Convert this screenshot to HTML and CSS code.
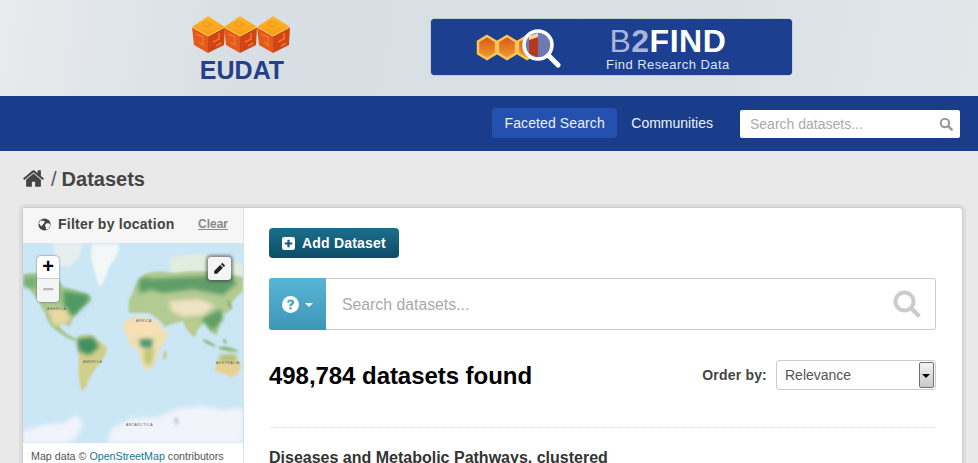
FILE: index.html
```html
<!DOCTYPE html>
<html lang="en">

<head>
    <meta charset="UTF-8">
    <meta name="viewport" content="width=device-width, initial-scale=1.0">
    <title>Datasets - B2FIND</title>
    <link rel="stylesheet" href="styles.css">
</head>

<body>
    <header class="masthead">
        <a class="logo" href="#">
            <svg class="logo-cubes" viewBox="0 0 98 38" width="98" height="38">
                <defs>
                    <linearGradient id="cubeTop" x1="0" y1="0" x2="0" y2="1">
                        <stop offset="0" stop-color="#fdb92e"/>
                        <stop offset="1" stop-color="#f79a15"/>
                    </linearGradient>
                    <g id="cube">
                        <path d="M16 0L33 11 16 20 0 11z" fill="url(#cubeTop)"/>
                        <path d="M0 11L16 20V37L2 29z" fill="#e35a1c"/>
                        <path d="M33 11L16 20V37L32 29z" fill="#cf4614"/>
                        <path d="M0 11L16 20 33 11" fill="none" stroke="#fdd35a" stroke-width="1"/>
                        <path d="M4 18l7 3v8M7 26l5 4M21 26l6-3v-6M24 30l5-3" fill="none" stroke="#f0752a" stroke-width="1.500"/>
                        <path d="M10 8l5-3 5 3-5 3z" fill="none" stroke="#f08f16" stroke-width="1"/>
                    </g>
                </defs>
                <use href="#cube"/>
                <use href="#cube" x="32"/>
                <use href="#cube" x="65"/>
            </svg>
            <span class="logo-name">EUDAT</span>
        </a>
        <a class="banner" href="#">
            <svg class="banner-icon" viewBox="0 0 88 40" width="88" height="40">
                <defs>
                    <linearGradient id="hexFill" x1="0" y1="0" x2="0" y2="1">
                        <stop offset="0" stop-color="#d9531a"/>
                        <stop offset="1" stop-color="#f0a030"/>
                    </linearGradient>
                </defs>
                <g stroke="#f8c65a" stroke-width="2.500" fill="url(#hexFill)">
                    <path d="M11 8l9 5.500v12l-9 5.500-9-5.500v-12z"/>
                    <path d="M31 8l9 5.500v12l-9 5.500-9-5.500v-12z"/>
                    <path d="M51 8l9 5.500v12l-9 5.500-9-5.500v-12z"/>
                </g>
                <circle cx="62" cy="17" r="14" fill="#6f79b4"/>
                <path d="M53 8l9-3v24l-9-3z" fill="#b5391d"/>
                <path d="M53 8l9-3 0 4-9 3z" fill="#f3d9a0"/>
                <circle cx="62" cy="17" r="14" fill="none" stroke="#fff" stroke-width="3.500"/>
                <path d="M73 28L82 37" stroke="#fff" stroke-width="5" stroke-linecap="round"/>
            </svg>
            <span class="banner-text">
                <span class="banner-title"><span class="banner-b">B</span><b class="banner-two">2</b><b>FIND</b></span>
                <span class="banner-sub">Find Research Data</span>
            </span>
        </a>
    </header>

    <nav class="navbar">
        <a class="nav-link active" href="#">Faceted Search</a>
        <a class="nav-link" href="#">Communities</a>
        <div class="nav-search">
            <span class="nav-placeholder">Search datasets...</span>
            <svg class="icon" viewBox="0 0 16 16" width="14" height="14">
                <circle cx="6.800" cy="6.800" r="4.800" fill="none" stroke="#999" stroke-width="2.400"/>
                <path d="M10.500 10.500L14.500 14.500" stroke="#999" stroke-width="2.800" stroke-linecap="round"/>
            </svg>
        </div>
    </nav>

    <div class="toolbar">
        <svg class="home" viewBox="0 0 1792 1792" width="23" height="23">
            <path fill="#444" d="M1472 992v480q0 26-19 45t-45 19h-384v-384h-256v384h-384q-26 0-45-19t-19-45v-480q0-1 .5-3t.5-3l575-474 575 474q1 2 1 6zm223-69l-62 74q-8 9-21 11h-3q-13 0-21-7l-692-577-692 577q-12 8-24 7-13-2-21-11l-62-74q-8-10-7-23.500t11-21.500l719-599q32-26 76-26t76 26l244 204v-195q0-14 9-23t23-9h192q14 0 23 9t9 23v408l219 182q10 8 11 21.500t-7 23.500z"/>
        </svg>
        <span class="crumb-sep">/</span>
        <strong class="crumb">Datasets</strong>
    </div>

    <div class="wrapper">
        <aside class="sidebar">
            <div class="filter-head">
                <h2 class="filter-title">
                    <svg class="icon" viewBox="0 0 16 16" width="13" height="13">
                        <circle cx="8" cy="8" r="7.500" fill="#444"/>
                        <path d="M3 3c2 1 4 0 5 1s-1 3-2 4-1 3-2 2-2-3-3-3zM10 7c2-1 4 0 5 1 0 3-2 6-4 6s-1-3-2-4 0-2 1-3z" fill="#f6f6f6"/>
                    </svg>
                    Filter by location
                </h2>
                <a class="filter-clear" href="#">Clear</a>
            </div>
            <div class="map">
                <svg class="map-art" viewBox="0 0 220 200" width="220" height="200">
                    <defs>
                        <filter id="soft" x="-10%" y="-10%" width="120%" height="120%">
                            <feGaussianBlur stdDeviation="1"/>
                        </filter>
                        <filter id="softer" x="-20%" y="-20%" width="140%" height="140%">
                            <feGaussianBlur stdDeviation="2.200"/>
                        </filter>
                    </defs>
                    <rect width="220" height="200" fill="#cbe7f6"/>

                    <!-- land base -->
                    <g filter="url(#soft)">
                        <!-- snow in the north -->
                        <path d="M30 0H60L56 14 46 24 32 22z" fill="#e6eef0"/>
                        <path d="M69 1H95Q98 6 93 14L86 24 80 40 76 44 72 30 68 14z" fill="#f3f7f8"/>
                        <path d="M146 16Q170 8 196 14 210 18 220 22V38L150 36z" fill="#e2ecdf"/>
                        <!-- north america -->
                        <path d="M0 32Q10 28 20 32 34 30 40 44 52 46 60 50 70 52 68 58 60 62 56 66 50 74 46 84 42 78 36 82 40 90 50 94 54 96 52 98 44 96 34 88 26 84 22 70 16 58 8 48 0 46z" fill="#a4c68f"/>
                        <!-- south america -->
                        <path d="M54 94Q62 90 68 92 76 98 84 104 84 112 76 122 68 130 64 142 60 150 58 146 54 132 56 118 52 106z" fill="#d2cf8c"/>
                        <!-- africa -->
                        <path d="M100 80Q106 74 116 74 128 74 134 82 140 88 146 90 142 100 136 106 134 118 126 128 122 128 118 118 116 104 106 102 98 94z" fill="#f1dfb2"/>
                        <path d="M141 108q3-1 3 3-1 6-3 6-2-1-1-4z" fill="#c9cd8e"/>
                        <!-- eurasia -->
                        <path d="M106 70Q104 56 110 50 110 42 120 32 132 26 150 30 176 26 200 30 214 32 220 34V48Q212 54 208 62 208 72 200 70 196 80 194 92 186 90 182 80 174 84 172 94 166 92 160 78 150 80 142 84 136 76 126 70 114 72z" fill="#b3cb92"/>
                        <path d="M180 96q8 2 14 8-8-1-14-6zM196 104q8-2 20 4-8 2-20-2zM200 96q4 0 4 5-3 0-4-3zM204 56q6 4 5 11-3-1-5-5z" fill="#8fb97e"/>
                        <!-- australia -->
                        <path d="M194 117Q200 110 208 111 216 114 218 124 214 134 208 134 200 130 192 128z" fill="#e8d193"/>
                    </g>

                    <!-- forests and deserts -->
                    <g filter="url(#softer)">
                        <path d="M40 48L66 52 64 60 52 72 42 72z" fill="#4f9a62"/>
                        <path d="M0 34L14 34 12 46 0 44z" fill="#77ad74"/>
                        <path d="M24 64L44 66 48 78 38 82 30 82z" fill="#ead9a0"/>
                        <path d="M54 96L70 94 76 104 66 112 56 108z" fill="#3f8f60"/>
                        <path d="M102 78L134 78 140 88 124 92 104 92z" fill="#f7dfb6"/>
                        <path d="M116 96L130 96 128 106 118 104z" fill="#4f9670"/>
                        <path d="M120 108L132 106 128 122 122 122z" fill="#c3c878"/>
                        <path d="M124 36L206 32 214 40 200 52 170 46 140 50 126 46z" fill="#5f9e68"/>
                        <path d="M116 36L126 34 126 48 116 50z" fill="#5f9e68"/>
                        <path d="M146 58L176 56 192 62 180 72 160 74 148 68z" fill="#efe3c1"/>
                        <path d="M178 76L198 66 200 76 190 88z" fill="#5f9f66"/>
                        <path d="M162 80L172 80 170 90z" fill="#c9cc78"/>
                        <path d="M196 112L214 112 212 118 198 118z" fill="#a6c27c"/>
                    </g>

                    <!-- ice at the bottom -->
                    <g filter="url(#softer)" fill="#f1f4fa">
                        <path d="M84 200L88 186 108 176 136 174 152 166 180 163 200 167 220 165V200z"/>
                        <path d="M0 200V188L20 182 40 180 54 172 60 182 52 196 44 200z"/>
                    </g>
                    <path d="M150 176q6-6 6 4-4 6-6-4z" fill="#cfd8ee" filter="url(#soft)"/>

                    <!-- small map labels -->
                    <g class="map-labels" fill="#55606a" font-size="3.500">
                        <text x="24" y="67">AMERICA</text>
                        <text x="60" y="120">AMERICA</text>
                        <text x="113" y="79">AFRICA</text>
                        <text x="193" y="121">AUSTRALIA</text>
                        <text x="103" y="183">ANTARCTICA</text>
                    </g>
                </svg>
                <div class="zoom-ctl">
                    <span class="zoom-btn zoom-in">+</span>
                    <span class="zoom-btn zoom-out">&minus;</span>
                </div>
                <div class="draw-ctl">
                    <svg viewBox="0 0 16 16" width="13" height="13">
                        <path fill="#222" d="M11.500 1l3.500 3.500-1.800 1.800-3.500-3.500zM8.800 3.700l3.500 3.500-7.300 7.300H1.500v-3.500z"/>
                    </svg>
                </div>
            </div>
            <p class="map-credit">Map data &copy; <a href="#">OpenStreetMap</a> contributors</p>
        </aside>

        <main class="primary">
            <a class="add-btn" href="#">
                <svg class="icon" viewBox="0 0 14 14" width="13" height="13">
                    <path fill="#fff" fill-rule="evenodd" d="M2.500 0h9A2.500 2.500 0 0 1 14 2.500v9a2.500 2.500 0 0 1-2.500 2.500h-9A2.500 2.500 0 0 1 0 11.500v-9A2.500 2.500 0 0 1 2.500 0zM5.800 3v2.800H3v2.400h2.800V11h2.400V8.200H11V5.800H8.200V3z"/>
                </svg>
                Add Dataset
            </a>

            <div class="search-box">
                <div class="search-addon">
                    <svg viewBox="0 0 16 16" width="17" height="17">
                        <circle cx="8" cy="8" r="8" fill="#fff"/>
                        <path d="M4.800 6.200C4.900 4.300 6.300 3.200 8.100 3.200c1.900 0 3.300 1.100 3.300 2.800 0 1.200-.7 1.900-1.500 2.400-.7.500-.8.700-.8 1.300H6.900c0-1.200.2-1.900 1.100-2.500.6-.4 1-.7 1-1.200 0-.5-.4-.9-1-.9-.7 0-1.100.4-1.200 1.100zM6.900 10.500h2.200v2.200H6.900z" fill="#47a4c4"/>
                    </svg>
                    <span class="caret"></span>
                </div>
                <span class="search-placeholder">Search datasets...</span>
                <svg class="search-glass" viewBox="0 0 28 28" width="28" height="28">
                    <circle cx="11.500" cy="11.500" r="9" fill="none" stroke="#ccc" stroke-width="4"/>
                    <path d="M18.500 18.500L25 25" stroke="#ccc" stroke-width="4.500" stroke-linecap="round"/>
                </svg>
            </div>

            <div class="results-head">
                <h1 class="results-count">498,784 datasets found</h1>
                <div class="order-by">
                    <label class="order-label">Order by:</label>
                    <div class="select">
                        <span class="select-value">Relevance</span>
                        <span class="select-arrow"></span>
                    </div>
                </div>
            </div>

            <ul class="dataset-list">
                <li class="dataset-item">
                    <h3 class="dataset-title">Diseases and Metabolic Pathways, clustered</h3>
                </li>
            </ul>
        </main>
    </div>
</body>

</html>
```

FILE: styles.css
```css
html,
body {
    height: 100%;
    overflow: hidden;
}

body {
    margin: 0;
    font-family: "Liberation Sans", Arial, sans-serif;
    font-size: 14px;
    color: #444;
    background-color: #e9e9e9;
}

a {
    text-decoration: none;
}

.icon {
    flex: none;
}

/* header */
.masthead {
    height: 96px;
    display: flex;
    background: linear-gradient(100deg, #e8ebee 0%, #d8dfe4 25%, #d9e0e5 70%, #e2e7ea 100%);
}

.logo {
    margin: 16px 0 0 192px;
    width: 98px;
    display: flex;
    flex-direction: column;
    align-items: center;
}

.logo-cubes {
    display: block;
}

.logo-name {
    margin-top: 2px;
    padding-left: 2px;
    font-size: 25px;
    line-height: 28px;
    font-weight: bold;
    color: #253f8c;
}

.banner {
    margin: 19px 0 0 141px;
    width: 361px;
    height: 56px;
    display: flex;
    align-items: center;
    background-color: #1c3f8f;
    border-radius: 4px;
    box-shadow: 0 0 1px #0b2050;
}

.banner-icon {
    margin: 2px 0 0 45px;
}

.banner-text {
    margin: 4px 0 0 42px;
    display: flex;
    flex-direction: column;
    align-items: center;
}

.banner-title {
    font-size: 32px;
    line-height: 30px;
    letter-spacing: 0.5px;
    color: #fff;
}

.banner-b {
    color: #a9b5da;
}

.banner-two {
    color: #a9b5da;
}

.banner-sub {
    margin-top: 2px;
    font-size: 13px;
    line-height: 14px;
    letter-spacing: 0.45px;
    color: #dfe5f2;
}

/* nav */
.navbar {
    height: 55px;
    padding-right: 18px;
    display: flex;
    align-items: center;
    justify-content: flex-end;
    background-color: #1a3d8b;
}

.nav-link {
    padding: 0 12px;
    height: 30px;
    line-height: 30px;
    margin-top: -1px;
    font-size: 14px;
    color: #eef1f8;
    border-radius: 4px;
}

.nav-link + .nav-link {
    margin-left: 2px;
}

.nav-link.active {
    padding: 0 12.500px;
    letter-spacing: 0.1px;
    background-color: #2450b0;
}

.nav-search {
    margin-left: 15px;
    width: 220px;
    height: 28px;
    padding: 0 7px 0 10px;
    box-sizing: border-box;
    display: flex;
    align-items: center;
    justify-content: space-between;
    background-color: #fff;
    border-radius: 2px;
}

.nav-placeholder {
    font-size: 14px;
    color: #aaa;
}

/* breadcrumb */
.toolbar {
    height: 57px;
    padding-left: 22px;
    padding-bottom: 1px;
    box-sizing: border-box;
    display: flex;
    align-items: center;
}

.home {
    margin-top: -1px;
}

.crumb-sep {
    margin: 0 5px 0 6px;
    font-size: 20px;
    color: #555;
}

.crumb {
    font-size: 20px;
    color: #444;
}

/* main module */
.wrapper {
    margin: 0 16px 0 23px;
    min-height: 400px;
    display: flex;
    background-color: #fff;
    border-radius: 3px;
    box-shadow: 0 0 0 1px #ccc, 0 0 0 4px rgba(0, 0, 0, 0.05);
}

.sidebar {
    width: 220px;
    flex: none;
    background-color: #fff;
    border-right: 1px solid #ddd;
}

.filter-head {
    height: 35px;
    padding: 0 15px 3px;
    box-sizing: border-box;
    display: flex;
    align-items: center;
    justify-content: space-between;
    background-color: #f6f6f6;
}

.filter-title {
    margin: 0;
    display: flex;
    align-items: center;
    gap: 7px;
    font-size: 14px;
    letter-spacing: 0.25px;
    color: #444;
}

.filter-clear {
    font-size: 12px;
    font-weight: bold;
    color: #888;
    text-decoration: underline;
}

.map {
    position: relative;
    height: 200px;
}

.map-art {
    display: block;
}

.map-labels {
    font-family: "Liberation Sans", Arial, sans-serif;
    letter-spacing: 0.5px;
}

.zoom-ctl {
    position: absolute;
    top: 13px;
    left: 14px;
    width: 22px;
    display: flex;
    flex-direction: column;
    background-color: #fff;
    border-radius: 4px;
    box-shadow: 0 0 2px rgba(0, 0, 0, 0.6);
}

.zoom-btn {
    height: 22px;
    line-height: 21px;
    text-align: center;
    font-size: 20px;
    font-weight: bold;
}

.zoom-in {
    color: #000;
    border-bottom: 1px solid #ccc;
}

.zoom-out {
    height: 23px;
    color: #bbb;
    background-color: #f4f4f4;
    border-radius: 0 0 4px 4px;
}

.draw-ctl {
    position: absolute;
    top: 14px;
    left: 185px;
    width: 23px;
    height: 23px;
    display: flex;
    align-items: center;
    justify-content: center;
    background-color: #f4f4f4;
    border-radius: 3px;
    box-shadow: 0 0 3px 2px rgba(70, 70, 70, 0.6);
}

.map-credit {
    margin: 0;
    padding: 7px 8px;
    font-size: 10.700px;
    color: #555;
}

.map-credit a {
    color: #187794;
}

/* results */
.primary {
    flex: 1;
    padding: 20px 26px 0 25px;
    min-width: 0;
}

.add-btn {
    width: 130px;
    height: 30px;
    box-sizing: border-box;
    padding-left: 13px;
    display: flex;
    align-items: center;
    gap: 7px;
    font-size: 14px;
    font-weight: bold;
    letter-spacing: 0.2px;
    color: #fff;
    background: linear-gradient(#1b6f8c, #0c4c66);
    border-radius: 4px;
}

.search-box {
    margin-top: 20px;
    height: 52px;
    display: flex;
    align-items: center;
    border: 1px solid #ccc;
    border-left: 0;
    border-radius: 3px;
    box-sizing: border-box;
}

.search-addon {
    width: 57px;
    height: 52px;
    margin-top: -1px;
    margin-bottom: -1px;
    display: flex;
    align-items: center;
    justify-content: center;
    gap: 6px;
    background: linear-gradient(#58b5d4, #3d96b8);
    border-radius: 3px 0 0 3px;
}

.caret {
    width: 0;
    height: 0;
    margin-top: 1px;
    border-left: 4px solid transparent;
    border-right: 4px solid transparent;
    border-top: 4px solid #fff;
}

.search-placeholder {
    margin-left: 16px;
    flex: 1;
    padding-top: 1px;
    font-size: 15.800px;
    color: #aaa;
}

.search-glass {
    margin-right: 14px;
}

.results-head {
    margin-top: 30px;
    height: 30px;
    display: flex;
    align-items: center;
    justify-content: space-between;
}

.results-count {
    margin: 2px 0 0;
    font-size: 24px;
    letter-spacing: -0.05px;
    color: #000;
}

.order-by {
    display: flex;
    align-items: center;
    gap: 9px;
}

.order-label {
    font-size: 14px;
    font-weight: bold;
    letter-spacing: 0.2px;
}

.select {
    width: 160px;
    height: 30px;
    box-sizing: border-box;
    padding: 1px;
    display: flex;
    align-items: stretch;
    justify-content: space-between;
    background-color: #fff;
    border: 1px solid #ccc;
    border-radius: 3px;
}

.select-value {
    padding-left: 7px;
    line-height: 27px;
    font-size: 14px;
    color: #555;
}

.select-arrow {
    width: 15px;
    position: relative;
    background: linear-gradient(#f4f4f4, #c8c8c8);
    border: 1px solid #707070;
    border-radius: 2px;
    box-sizing: border-box;
}

.select-arrow::after {
    content: "";
    position: absolute;
    top: 11px;
    left: 2px;
    border-left: 4px solid transparent;
    border-right: 4px solid transparent;
    border-top: 4px solid #000;
}

.dataset-list {
    margin: 37px 0 0;
    padding: 0;
    list-style: none;
    border-top: 1px dotted #ddd;
}

.dataset-item {
    padding-top: 20px;
}

.dataset-title {
    margin: 0;
    font-size: 16px;
    line-height: 20px;
    color: #333;
}
```
